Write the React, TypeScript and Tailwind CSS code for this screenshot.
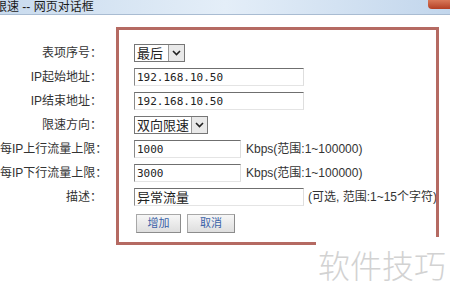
const cjk = { fontFamily: '"Liberation Sans", "Noto Sans CJK SC", sans-serif' };
const mono = { fontFamily: '"DejaVu Sans Mono", "Noto Sans CJK SC", monospace' };

function Field({ value, width, isMono }: { value: string; width: string; isMono?: boolean }) {
  return (
    <div
      className={`${width} h-[18px] border border-t-[#6f6f6f] border-l-[#8a8a8a] border-r-[#dedede] border-b-[#e4e4e4] bg-white flex items-center pl-[2px] text-[13px] text-[#222] leading-none whitespace-nowrap`}
      style={isMono ? { ...mono, fontSize: "11px" } : cjk}
    >
      {value}
    </div>
  );
}

function Select({ value, width }: { value: string; width: string }) {
  return (
    <div className={`${width} h-[18px] border border-[#767676] bg-white flex items-center text-[13px] text-[#222] leading-none whitespace-nowrap`} style={cjk}>
      <span className="flex-1 pl-[2px]">{value}</span>
      <span className="w-[16px] h-[16px] shrink-0 border-l border-[#9a9a9a] bg-[#e9e9e9] flex items-center justify-center">
        <svg width="9" height="6" viewBox="0 0 9 6">
          <path d="M1 1 L4.5 4.5 L8 1" stroke="#222" strokeWidth="1.6" fill="none" />
        </svg>
      </span>
    </div>
  );
}

function Btn({ label, width }: { label: string; width: string }) {
  return (
    <div
      className={`${width} h-[19px] border border-[#a8a8a8] border-b-[#8c8c8c] border-r-[#8c8c8c] bg-gradient-to-b from-[#f7f7f7] to-[#dedede] flex items-center justify-center text-[11px] text-[#3a62a8]`}
      style={cjk}
    >
      {label}
    </div>
  );
}

export default function App() {
  const rows: { label: string; control: React.ReactNode }[] = [
    { label: "表项序号：", control: <Select value="最后" width="w-[51px]" /> },
    { label: "IP起始地址：", control: <Field value="192.168.10.50" width="w-[170px]" isMono /> },
    { label: "IP结束地址：", control: <Field value="192.168.10.50" width="w-[170px]" isMono /> },
    { label: "限速方向：", control: <Select value="双向限速" width="w-[74px]" /> },
    {
      label: "每IP上行流量上限：",
      control: (
        <div className="flex items-center gap-[5px]">
          <Field value="1000" width="w-[107px]" isMono />
          <span className="text-[12px] text-[#333] whitespace-nowrap">Kbps(范围:1~100000)</span>
        </div>
      ),
    },
    {
      label: "每IP下行流量上限：",
      control: (
        <div className="flex items-center gap-[5px]">
          <Field value="3000" width="w-[107px]" isMono />
          <span className="text-[12px] text-[#333] whitespace-nowrap">Kbps(范围:1~100000)</span>
        </div>
      ),
    },
    {
      label: "描述：",
      control: (
        <div className="flex items-center gap-[4px]">
          <Field value="异常流量" width="w-[170px]" />
          <span className="text-[12px] text-[#333] whitespace-nowrap">(可选, 范围:1~15个字符)</span>
        </div>
      ),
    },
  ];

  return (
    <div className="relative w-[450px] h-[302px] overflow-hidden bg-white" style={cjk}>
      <div className="h-[15px] border-b border-[#a9bcd2] bg-gradient-to-r from-[#c9dbee] via-[#e4eef8] to-[#c2d6ec] flex items-center">
        <span className="-ml-[5px] text-[12px] text-[#1a1a1a] leading-none whitespace-nowrap">限速 -- 网页对话框</span>
        <div className="ml-auto self-start w-[22px] h-[9px] rounded-bl-[4px] bg-gradient-to-b from-[#d9795a] to-[#b33f24]" />
      </div>

      <div className="grid grid-cols-[102px_1fr] gap-x-[32px] gap-y-[6px] pt-[29px] items-center">
        {rows.map((r) => (
          <div key={r.label} className="contents">
            <div className="text-right text-[12px] text-[#333] whitespace-nowrap leading-[18px]">{r.label}</div>
            <div className="h-[18px] flex items-center">{r.control}</div>
          </div>
        ))}
        <div />
        <div className="flex gap-[6px] pl-[2px] pt-[2px]">
          <Btn label="增加" width="w-[45px]" />
          <Btn label="取消" width="w-[48px]" />
        </div>
      </div>

      <div className="absolute left-[116px] top-[27px] w-[323px] h-[218px] border-[3px] border-[#b56a62] pointer-events-none" />

      <div className="absolute left-[316px] top-[237px] right-0 bottom-0 bg-white">
        <div className="pt-[11px] pl-[2px] text-[32px] leading-none text-[#d2d2d2]" style={{ fontFamily: '"Noto Sans CJK SC", sans-serif', fontWeight: 300 }}>
          软件技巧
        </div>
      </div>
    </div>
  );
}
